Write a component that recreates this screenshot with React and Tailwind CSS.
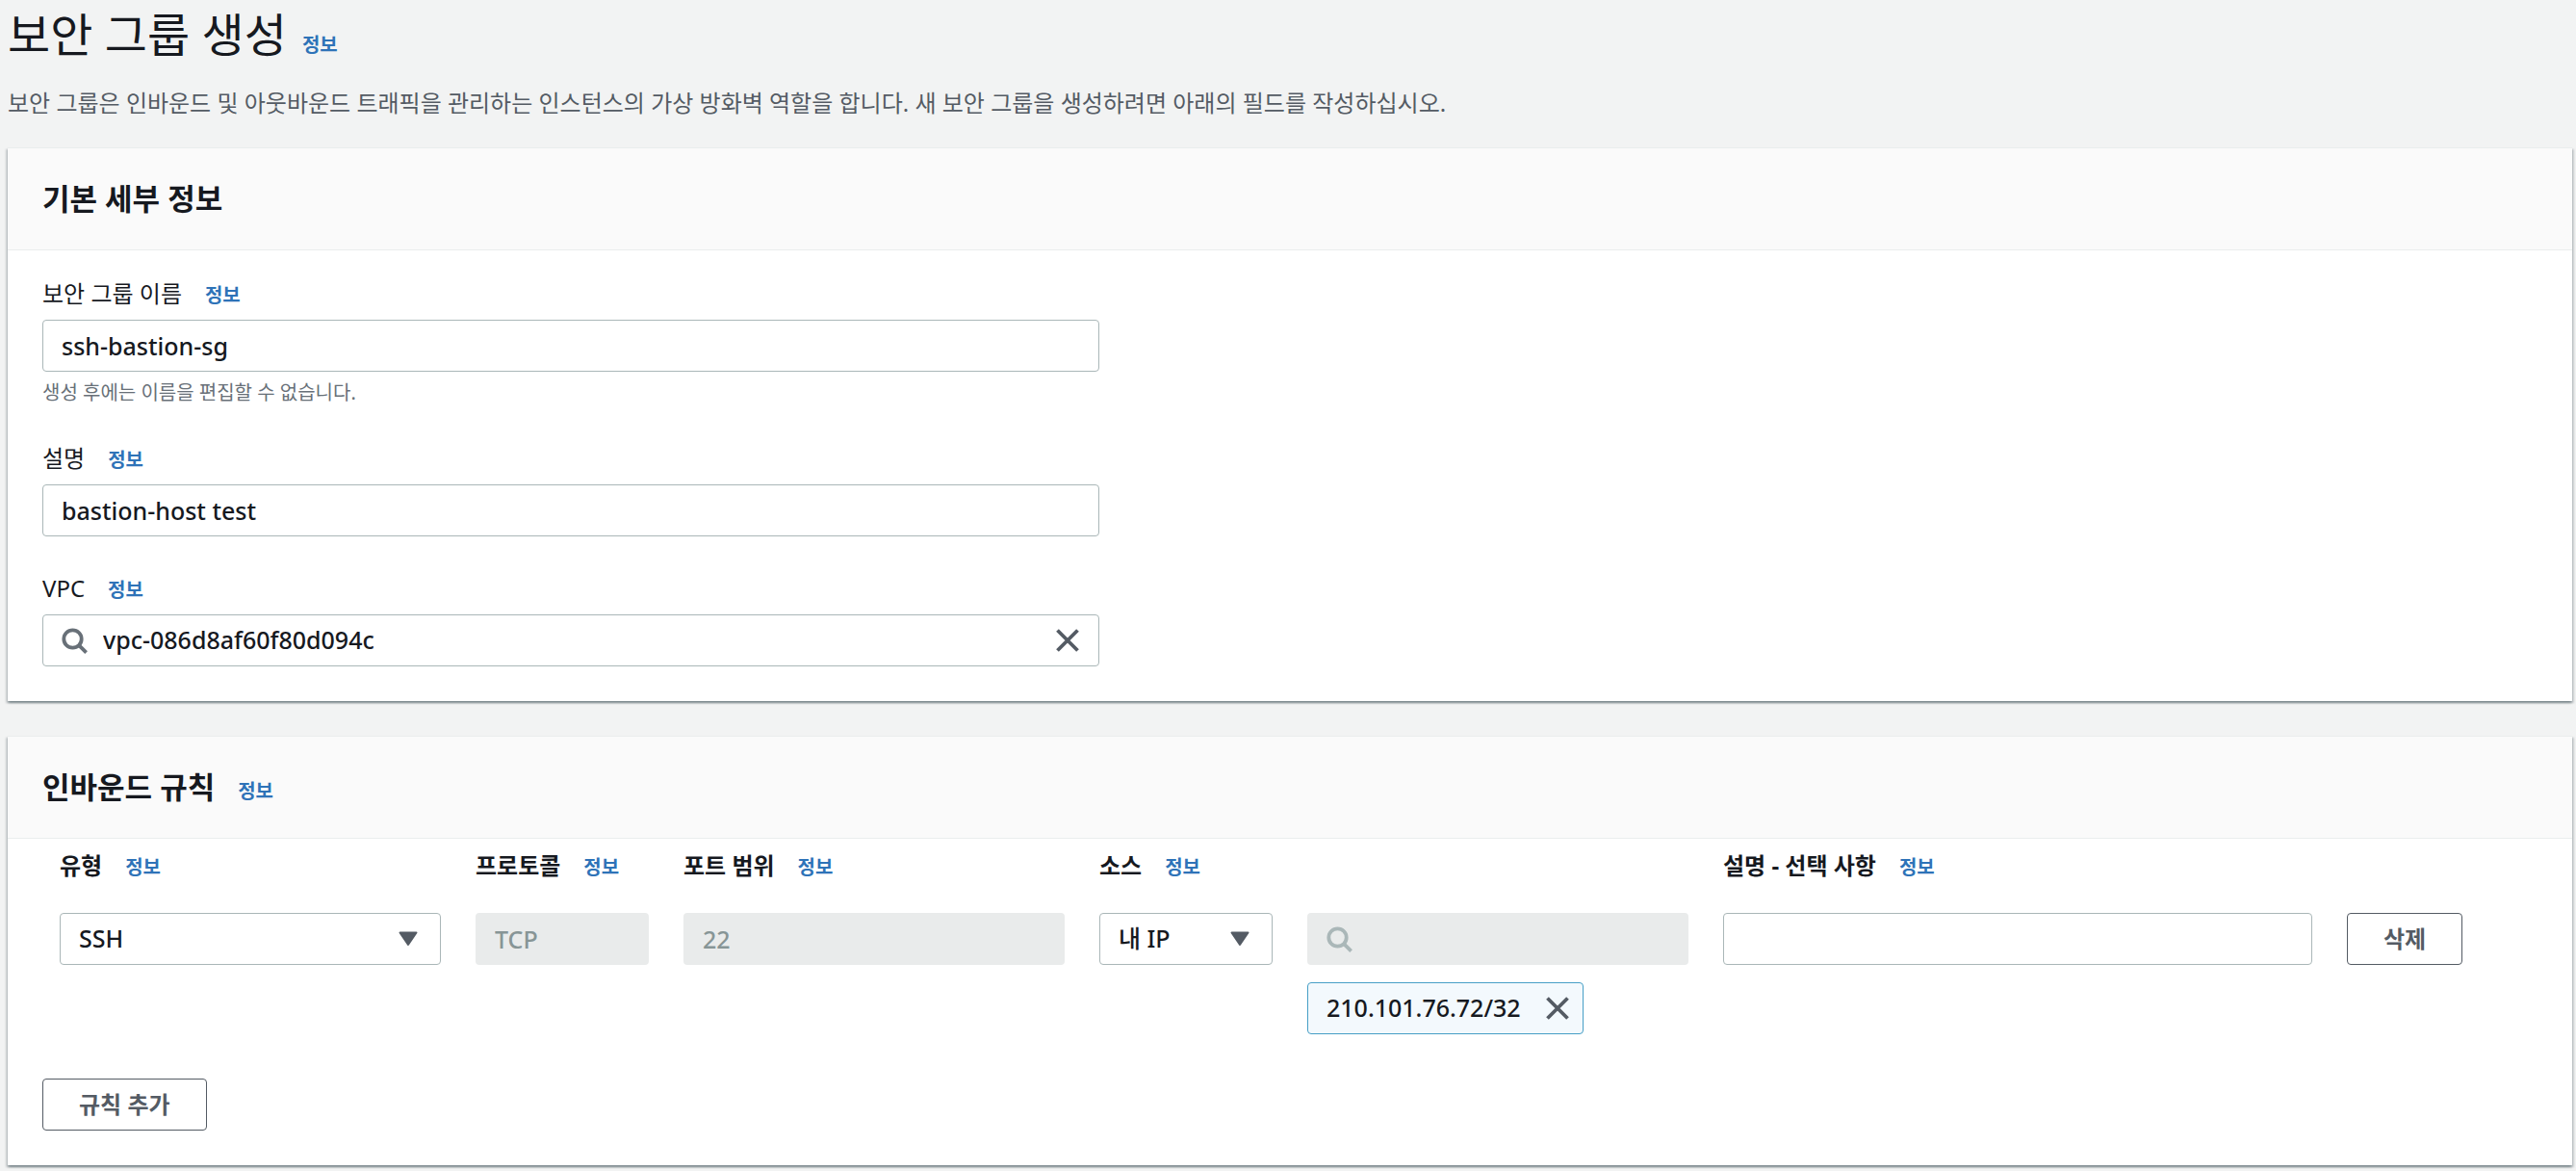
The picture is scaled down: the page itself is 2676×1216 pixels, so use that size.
function InfoLink() {
  return (
    <a href="#info" className="text-[20px] leading-[28px] font-bold text-[#2e73b8] whitespace-nowrap">정보</a>
  )
}

function SearchIcon({ className }) {
  return (
    <svg viewBox="0 0 28 28" fill="none" stroke="currentColor" strokeWidth="3.8" className={`size-[28px] shrink-0 ${className}`}>
      <circle cx="12.5" cy="12.5" r="9.2" />
      <path d="M18.8 18.8L26.6 26.6" />
    </svg>
  )
}

function CloseIcon() {
  return (
    <svg viewBox="0 0 28 28" fill="none" stroke="currentColor" strokeWidth="3.8" className="size-[28px]">
      <path d="M3.5 3.5L24.5 24.5M24.5 3.5L3.5 24.5" />
    </svg>
  )
}

function Panel({ title, info, children }) {
  return (
    <section className="bg-white border-t border-[#eaeded] shadow-[0_2px_2px_0_rgba(0,28,36,0.3),2px_2px_2px_0_rgba(0,28,36,0.15),-2px_2px_2px_0_rgba(0,28,36,0.15)]">
      <div className="flex items-baseline gap-[24px] px-[36px] py-[32px] bg-[#fafafa] border-b border-[#eaeded]">
        <h2 className="text-[31px] leading-[41px] font-bold">{title}</h2>
        {info && <InfoLink />}
      </div>
      {children}
    </section>
  )
}

function Field({ id, label, hint, children }) {
  return (
    <div>
      <div className="flex items-baseline gap-[24px] mb-[7px]">
        <label htmlFor={id} className="leading-[40px]">{label}</label>
        <InfoLink />
      </div>
      {children}
      {hint && <p className="mt-2 text-[20px] leading-[28px] text-[#687078]">{hint}</p>}
    </div>
  )
}

function ColumnLabel({ id, span, children }) {
  return (
    <div className={`flex items-baseline gap-[24px] whitespace-nowrap ${span}`}>
      <label htmlFor={id} className="leading-[40px] font-bold">{children}</label>
      <InfoLink />
    </div>
  )
}

const inputClass = 'block w-full h-[54px] px-[19px] text-[25px] font-medium bg-white border border-[#aab7b8] rounded-[4px]'
const disabledClass = 'block w-full h-[54px] px-[20px] text-[25px] font-medium bg-[#e9ebeb] text-[#879596] rounded-[4px]'
const buttonClass = 'h-[54px] px-[37px] font-bold text-[#545b64] bg-white border border-[#545b64] rounded-[4px] whitespace-nowrap'

function Select({ id, value, className }) {
  return (
    <div className={`relative ${className}`}>
      <select id={id} defaultValue={value} className={`${inputClass} appearance-none`}>
        <option>{value}</option>
      </select>
      <svg viewBox="0 0 20 16" className="absolute right-[24px] top-[19px] w-[20px] h-[16px] pointer-events-none">
        <path d="M1.5 1.5H18.5L10 14Z" fill="#545b64" stroke="#545b64" strokeWidth="2" strokeLinejoin="round" />
      </svg>
    </div>
  )
}

export default function App() {
  return (
    <main
      lang="ko"
      className="min-h-screen bg-[#f2f3f3] pl-[8px] pr-[4px] pb-[6px] text-[24px] text-[#16191f] font-['Noto_Sans','Noto_Sans_CJK_KR',sans-serif]"
    >
      <header className="mb-[26px]">
        <div className="flex items-baseline gap-[16px]">
          <h1 className="text-[48px] leading-[72px]">보안 그룹 생성</h1>
          <InfoLink />
        </div>
        <p className="mt-[15px] leading-[40px] text-[#545b64]">
          보안 그룹은 인바운드 및 아웃바운드 트래픽을 관리하는 인스턴스의 가상 방화벽 역할을 합니다. 새 보안 그룹을 생성하려면 아래의 필드를 작성하십시오.
        </p>
      </header>

      <div className="flex flex-col gap-[36px]">
        <Panel title="기본 세부 정보">
          <div className="flex flex-col gap-[34px] max-w-[1170px] px-[36px] pt-[25px] pb-[36px]">
            <Field id="group-name" label="보안 그룹 이름" hint="생성 후에는 이름을 편집할 수 없습니다.">
              <input id="group-name" type="text" defaultValue="ssh-bastion-sg" className={inputClass} />
            </Field>
            <Field id="description" label="설명">
              <input id="description" type="text" defaultValue="bastion-host test" className={inputClass} />
            </Field>
            <Field id="vpc" label="VPC">
              <div className="flex items-center h-[54px] px-[18px] bg-white border border-[#aab7b8] rounded-[4px]">
                <SearchIcon className="text-[#687078]" />
                <input id="vpc" type="text" defaultValue="vpc-086d8af60f80d094c" className="grow min-w-0 pl-[16px] text-[25px] font-medium" />
                <button type="button" aria-label="지우기" className="text-[#545b64]"><CloseIcon /></button>
              </div>
            </Field>
          </div>
        </Panel>

        <Panel title="인바운드 규칙" info>
          <div className="px-[36px] pt-[8px] pb-[36px]">
            <div className="grid grid-cols-12 gap-x-[36px] px-[18px]">
              <ColumnLabel id="rule-type" span="col-span-2">유형</ColumnLabel>
              <ColumnLabel id="rule-protocol" span="col-span-1">프로토콜</ColumnLabel>
              <ColumnLabel id="rule-port" span="col-span-2">포트 범위</ColumnLabel>
              <ColumnLabel id="rule-source" span="col-span-3">소스</ColumnLabel>
              <ColumnLabel id="rule-description" span="col-span-4">설명 - 선택 사항</ColumnLabel>
            </div>
            <div className="grid grid-cols-12 gap-x-[36px] items-start px-[18px] mt-[29px]">
              <Select id="rule-type" value="SSH" className="col-span-2" />
              <input id="rule-protocol" type="text" disabled defaultValue="TCP" className={disabledClass} />
              <input id="rule-port" type="text" disabled defaultValue="22" className={`${disabledClass} col-span-2`} />
              <Select id="rule-source" value="내 IP" className="col-span-1" />
              <div className="col-span-2 flex flex-col items-start gap-[18px]">
                <div className="flex items-center w-full h-[54px] px-[19px] bg-[#e9ebeb] rounded-[4px]">
                  <SearchIcon className="text-[#aab7b8]" />
                  <input type="text" disabled aria-label="소스 검색" className="grow min-w-0 pl-[16px] text-[25px]" />
                </div>
                <div className="flex items-center gap-[24px] h-[54px] pl-[19px] pr-[12px] text-[25px] font-medium bg-[#f3f9fd] border border-[#479fc6] rounded-[4px]">
                  <span>210.101.76.72/32</span>
                  <button type="button" aria-label="제거" className="text-[#545b64]"><CloseIcon /></button>
                </div>
              </div>
              <input id="rule-description" type="text" className={`${inputClass} col-span-3`} />
              <button type="button" className={`${buttonClass} justify-self-start`}>삭제</button>
            </div>
            <button type="button" className={`${buttonClass} mt-[46px]`}>규칙 추가</button>
          </div>
        </Panel>
      </div>
    </main>
  )
}
